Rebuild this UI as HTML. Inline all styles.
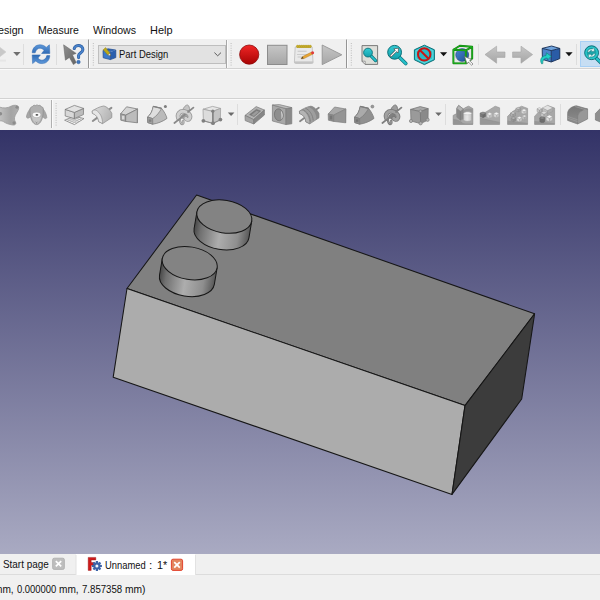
<!DOCTYPE html>
<html><head><meta charset="utf-8">
<style>
html,body{margin:0;padding:0;}
body{width:600px;height:600px;overflow:hidden;position:relative;background:#f0f0f0;font-family:"Liberation Sans",sans-serif;font-size:10.7px;color:#000;}
.abs{position:absolute;}
#menubar{left:0;top:0;width:600px;height:39px;background:#fff;}
.t{position:absolute;z-index:5;white-space:nowrap;line-height:12px;height:12px;transform-origin:0 0;color:#111;}
#ov{left:0;top:0;}
</style></head><body>
<div id="menubar" class="abs"></div>
<!-- active tab + highlighted button backgrounds -->
<div class="abs" style="left:76px;top:554px;width:119px;height:20.5px;background:#fff"></div>

<!-- TEXT -->
<span class="t" style="left:-2px;top:23.7px;transform:scaleX(1.0)">esign</span>
<span class="t" style="left:37.72px;top:23.7px;transform:scaleX(0.982)">Measure</span>
<span class="t" style="left:93.0px;top:23.7px;transform:scaleX(0.993)">Windows</span>
<span class="t" style="left:149.68px;top:23.7px;transform:scaleX(1.024)">Help</span>
<span class="t" style="left:119.1px;top:48.1px;transform:scaleX(0.884)">Part Design</span>
<span class="t" style="left:2.87px;top:558.1px;transform:scaleX(0.927)">Start page</span>
<span class="t" style="left:105.3px;top:559.3px;transform:scaleX(0.878)">Unnamed</span>
<span class="t" style="left:149.2px;top:559.3px;transform:scaleX(1.1)">:</span>
<span class="t" style="left:156.59px;top:559.3px;transform:scaleX(1.011)">1*</span>
<span class="t" style="left:-6.24px;top:582.6px;transform:scaleX(0.947)">mm,</span>
<span class="t" style="left:17.0px;top:582.6px;transform:scaleX(0.882)">0.000000</span>
<span class="t" style="left:59.35px;top:582.6px;transform:scaleX(0.947)">mm,</span>
<span class="t" style="left:81.6px;top:582.6px;transform:scaleX(0.902)">7.857358</span>
<span class="t" style="left:124.84px;top:582.6px;transform:scaleX(0.96)">mm)</span>

<!-- GRAPHICS OVERLAY -->
<svg id="ov" class="abs" width="600" height="600" viewBox="0 0 600 600">
<defs>
  <linearGradient id="bg" x1="0" y1="0" x2="0" y2="1">
   <stop offset="0" stop-color="#333367"/>
   <stop offset="1" stop-color="#a9aac2"/>
  </linearGradient>
  <linearGradient id="cyl" x1="0" y1="0" x2="1" y2="0">
   <stop offset="0" stop-color="#484848"/>
   <stop offset="0.12" stop-color="#707070"/>
   <stop offset="0.47" stop-color="#adadad"/>
   <stop offset="0.8" stop-color="#8e8e8e"/>
   <stop offset="1" stop-color="#585858"/>
  </linearGradient>
  <linearGradient id="gBlue" x1="0" y1="0" x2="0" y2="1"><stop offset="0" stop-color="#5e98da"/><stop offset="1" stop-color="#2f6bb5"/></linearGradient>
  <linearGradient id="gRed" x1="0" y1="0" x2="0" y2="1"><stop offset="0" stop-color="#f02626"/><stop offset="1" stop-color="#a80404"/></linearGradient>
  <linearGradient id="gGray" x1="0" y1="0" x2="0" y2="1"><stop offset="0" stop-color="#c6c6c6"/><stop offset="1" stop-color="#a6a6a6"/></linearGradient>
  <linearGradient id="gTeal" x1="0" y1="0" x2="0" y2="1"><stop offset="0" stop-color="#34ccd4"/><stop offset="1" stop-color="#12a0ac"/></linearGradient>
  <linearGradient id="gBox" x1="0" y1="0" x2="1" y2="1"><stop offset="0" stop-color="#4a86d0"/><stop offset="1" stop-color="#1e4f94"/></linearGradient>
  <linearGradient id="gRev" x1="0" y1="0" x2="1" y2="0.4"><stop offset="0" stop-color="#dedede"/><stop offset="1" stop-color="#b6b6b6"/></linearGradient>
  <linearGradient id="gCur" x1="0" y1="0" x2="1" y2="1"><stop offset="0" stop-color="#909090"/><stop offset="1" stop-color="#646464"/></linearGradient>
  <linearGradient id="gBlob" x1="0" y1="0" x2="1" y2="0"><stop offset="0" stop-color="#c2c2c2"/><stop offset="0.6" stop-color="#a4a4a4"/><stop offset="1" stop-color="#b0b0b0"/></linearGradient>
  <linearGradient id="gFil" x1="0" y1="0" x2="0" y2="1"><stop offset="0" stop-color="#767676"/><stop offset="1" stop-color="#8e8e8e"/></linearGradient>
  <linearGradient id="gCylS" x1="0" y1="0" x2="1" y2="0"><stop offset="0" stop-color="#d2d2d2"/><stop offset="0.45" stop-color="#e6e6e6"/><stop offset="1" stop-color="#c4c4c4"/></linearGradient>
  <g id="handle"><path d="M0.5,0v23" stroke="#bcbcbc" stroke-width="1" stroke-dasharray="1 1.4" fill="none"/></g>
</defs>

<!-- toolbar lines -->
<rect x="0" y="68" width="600" height="1" fill="#d2d2d2"/>
<rect x="0" y="69" width="600" height="1" fill="#fafafa"/>
<rect x="0" y="98" width="600" height="1" fill="#d2d2d2"/>
<rect x="0" y="99" width="600" height="1" fill="#fafafa"/>

<!-- VIEWPORT -->
<rect x="0" y="130" width="600" height="424" fill="url(#bg)"/>
<g stroke="#161616" stroke-width="1.05" stroke-linejoin="round">
  <polygon points="196.6,195 534.6,313.8 465,405.6 127,288.5" fill="#808080"/>
  <polygon points="127,288.5 465,405.6 452,494.4 113.2,377.2" fill="#acacac"/>
  <polygon points="465,405.6 534.6,313.8 521.7,399 452,494.4" fill="#3c3c3c"/>
</g>
<!-- cylinders -->
<g id="cyl1" transform="translate(224.3,216.6) rotate(9.5)">
  <path d="M-27.8,0 L-27.8,16.9 A27.8,16.3 0 0 0 27.8,16.9 L27.8,0 Z" fill="url(#cyl)" stroke="#161616" stroke-width="1"/>
  <ellipse cx="0" cy="0" rx="27.8" ry="16.3" fill="#838383" stroke="#161616" stroke-width="1"/>
</g>
<g id="cyl2" transform="translate(189.7,263.2) rotate(9.5)">
  <path d="M-27.8,0 L-27.8,16.9 A27.8,16.3 0 0 0 27.8,16.9 L27.8,0 Z" fill="url(#cyl)" stroke="#161616" stroke-width="1"/>
  <ellipse cx="0" cy="0" rx="27.8" ry="16.3" fill="#838383" stroke="#161616" stroke-width="1"/>
</g>

<!-- ===== TOOLBAR 1 ===== -->
<g id="tb1">
 <!-- partial redo arrow -->
 <path d="M-1,46.6 L6,52 L-1,57.4 Z" fill="#c8c8c8" stroke="#d0d0d0" stroke-width="0.6"/><rect x="0" y="59.6" width="6" height="2" fill="#e6e6e6"/>
 <path d="M13.2,52 h7.4 l-3.7,4 z" fill="#6f6f6f"/>
 <rect x="23" y="44" width="1" height="21" fill="#dddddd"/>
 <!-- refresh -->
 <g fill="url(#gBlue)" stroke="#2d66ae" stroke-width="0.5" stroke-linejoin="round">
  <path id="rf" d="M32.2,52.8 C32.4,48 35.6,44.8 40,44.8 C42.6,44.8 44.6,45.8 46.2,47.4 L49.4,44.8 L49.8,53.5 L41.6,53.5 L44,50.4 C43,49 41.6,48.2 40,48.2 C37.6,48.2 35.8,50 35.2,52.8 Z"/>
  <use href="#rf" transform="rotate(180 41 54.2)"/>
 </g>
 <rect x="56" y="44" width="1" height="21" fill="#dddddd"/>
 <!-- whats this -->
 <path d="M63.6,44.8 L76.2,53.4 L72.4,54.8 L76.2,62.6 L73.4,64.6 L69.4,57.4 L65.4,60.2 Z" fill="url(#gCur)" stroke="#626262" stroke-width="0.5" stroke-linejoin="round"/>
 <path d="M74.2,48.6 C74.8,45.8 77.8,45.2 80,45.8 C82.8,46.6 83.6,49.4 82.2,51.4 C81,53 78.8,53.6 78.6,55.4 L78.6,57.4" fill="none" stroke="#2c5c9e" stroke-width="3" stroke-linecap="round"/>
 <path d="M74.2,48.6 C74.8,45.8 77.8,45.2 80,45.8 C82.8,46.6 83.6,49.4 82.2,51.4 C81,53 78.8,53.6 78.6,55.4 L78.6,57.4" fill="none" stroke="#4a84cc" stroke-width="1.7" stroke-linecap="round"/>
 <circle cx="78.5" cy="62" r="1.7" fill="#3f78c0" stroke="#2c5c9e" stroke-width="0.6"/>
 <!-- toolbar separator + handle -->
 <rect x="88" y="39.5" width="1" height="28.5" fill="#959595"/>
 <rect x="89" y="40" width="1" height="28" fill="#fbfbfb"/>
 <use href="#handle" x="92.8" y="43"/>
 <!-- combobox -->
 <rect x="98.5" y="45.5" width="127" height="18" fill="#e2e2e2" stroke="#bebebe" stroke-width="1"/>
 <!-- part design icon -->
 <g stroke-linejoin="round">
  <path d="M103,50.4 L110.4,52 L110.4,59.6 L103.2,57.8 Z" fill="#3b79cb"/>
  <path d="M110.4,52 L115.8,50 L115.8,57.6 L110.4,59.6 Z" fill="#2a5fae"/>
  <path d="M103,50.4 L108,48.8 L115.8,50 L110.4,52 Z" fill="#3468b4"/>
  <path d="M103,50.4 L108,48.8 L115.8,50 L115.8,57.6 L110.4,59.6 L103.2,57.8 Z M110.4,52 L110.4,59.6" fill="none" stroke="#1d478c" stroke-width="0.7"/>
  <path d="M103.2,49.8 L105.6,47.6 L110,53.2 L107.8,55 Z" fill="#bca81a" stroke="#8a7a10" stroke-width="0.4"/>
  <path d="M107.8,55 L110,53.2 L110.8,56 Z" fill="#f6f2e6" stroke="#6a5a20" stroke-width="0.3"/>
  <path d="M109.9,55.2 L110.8,56 L110.4,54.8 Z" fill="#3a3010"/>
 </g>
 <path d="M214.4,52.6 L217.7,55.8 L221,52.6" fill="none" stroke="#5a5a5a" stroke-width="1"/>
 <rect x="226" y="40" width="1" height="28" fill="#a8a8a8"/>
 <rect x="227" y="40" width="1" height="28" fill="#fbfbfb"/>
 <use href="#handle" x="230.6" y="43"/>
 <!-- record -->
 <circle cx="249.2" cy="54.6" r="9.6" fill="url(#gRed)" stroke="#8e0a0a" stroke-width="0.8"/>
 <!-- stop -->
 <rect x="267.5" y="45.3" width="19.5" height="19.2" fill="url(#gGray)" stroke="#8c8c8c" stroke-width="1"/>
 <!-- notepad -->
 <g>
  <path d="M295.2,47 h17 l0.8,15 q0,1.4 -1.4,1.4 h-15.8 q-1.4,0 -1.4,-1.4 z" fill="#e9e9e9" stroke="#b4b4b4" stroke-width="0.7"/>
  <rect x="294.6" y="61.4" width="18.6" height="2" fill="#c4c4c4"/>
  <rect x="296.8" y="46.3" width="14.2" height="1.5" fill="#c4aa28"/>
  <g fill="#c8ae2a" stroke="#a08c1c" stroke-width="0.3"><circle cx="297.6" cy="46.3" r="1.25"/><circle cx="299.7" cy="46.3" r="1.25"/><circle cx="301.8" cy="46.3" r="1.25"/><circle cx="303.9" cy="46.3" r="1.25"/><circle cx="306.0" cy="46.3" r="1.25"/><circle cx="308.1" cy="46.3" r="1.25"/><circle cx="310.2" cy="46.3" r="1.25"/></g>
  <rect x="297.6" y="50.6" width="9" height="1.4" fill="#cfcfcf"/>
  <rect x="297" y="54.2" width="14" height="0.8" fill="#c4c4c4"/>
  <rect x="297.6" y="56.2" width="6" height="1.6" fill="#d4d4d4"/>
  <path d="M301,58.8 L302.6,56.6 L311.6,52 L313,54 L304,58.6 Z" fill="#e8a634" stroke="#a46a14" stroke-width="0.4"/>
  <path d="M301,58.8 L302.6,56.6 L303.6,58.4 Z" fill="#5a4a30"/>
  <circle cx="312.6" cy="52.8" r="1.5" fill="#e03a3a"/>
 </g>
 <!-- play -->
 <path d="M322.2,45 L341.8,54.8 L322.2,64.6 Z" fill="url(#gGray)" stroke="#959595" stroke-width="0.9" stroke-linejoin="round"/>
 <rect x="346" y="39.5" width="1" height="28.5" fill="#959595"/>
 <rect x="347" y="40" width="1" height="28" fill="#fbfbfb"/>
 <use href="#handle" x="350.8" y="43"/>
 <!-- zoom fit page -->
 <g>
  <path d="M362,45.6 h15.6 v18.8 h-12.4 l-3.2,-3.2 z" fill="#dedfda" stroke="#6e6e6e" stroke-width="0.9" stroke-linejoin="round"/>
  <path d="M362,61.2 l3.2,0 l0,3.2 z" fill="#f4f4f4" stroke="#6e6e6e" stroke-width="0.6"/>
  <path d="M371,55.8 L375.6,60.6" stroke="#0b6f78" stroke-width="3.2" stroke-linecap="round"/>
  <path d="M371,55.8 L375.6,60.6" stroke="#25c0ca" stroke-width="1.8" stroke-linecap="round"/>
  <circle cx="368" cy="52.6" r="4.4" fill="url(#gTeal)" stroke="#0b6f78" stroke-width="0.9"/>
 </g>
 <!-- zoom w/ arrow -->
 <g>
  <path d="M399.4,57.2 L405.8,63.6" stroke="#0b6f78" stroke-width="3.6" stroke-linecap="round"/>
  <path d="M399.4,57.2 L405.8,63.6" stroke="#25c0ca" stroke-width="2.2" stroke-linecap="round"/>
  <circle cx="394.6" cy="52.3" r="6.9" fill="url(#gTeal)" stroke="#0b6f78" stroke-width="1"/>
  <path d="M391,55.9 L396.2,50.7" stroke="#4a4a4a" stroke-width="2.4" stroke-linecap="round"/>
  <path d="M398.6,48.2 L398,53 L393.8,48.8 Z" fill="#fff" stroke="#4a4a4a" stroke-width="0.7" stroke-linejoin="round"/>
  <path d="M391,55.9 L396.2,50.7" stroke="#fff" stroke-width="1.3" stroke-linecap="round"/>
 </g>
 <!-- hexagon no -->
 <g>
  <path d="M424.4,45.2 L434.4,49.8 L434.4,59.8 L424.4,64.6 L414.4,59.8 L414.4,49.8 Z" fill="#2ec4cc" stroke="#0b6f78" stroke-width="1" stroke-linejoin="round"/>
  <path d="M424.4,47 L432.8,50.8 L432.8,58.8 L424.4,62.8 L416,58.8 L416,50.8 Z" fill="none" stroke="#7fe4ea" stroke-width="0.6"/>
  <circle cx="424.2" cy="54.4" r="6.2" fill="#27bac4" stroke="#c81414" stroke-width="2"/>
  <path d="M419.8,50 L428.6,58.8" stroke="#c81414" stroke-width="2"/>
 </g>
 <path d="M440,52.2 h7.2 l-3.6,4 z" fill="#111"/>
 <!-- bounding box select -->
 <g>
  <path d="M453.4,49.8 L459.8,45.8 L472.2,46.8 L472.2,58.6 L465.8,63.4 L453.4,63.2 Z" fill="#e4e8e4"/>
  <circle cx="462.2" cy="55" r="6.5" fill="url(#gBox)" stroke="#1a3a70" stroke-width="0.5"/>
  <g fill="none" stroke="#0f7f0f" stroke-width="1.9" stroke-linejoin="round">
   <path d="M453.4,49.8 L465.8,50.4 L465.8,63.4 L453.4,63.2 Z"/>
   <path d="M453.4,49.8 L459.8,45.8 L472.2,46.8 L465.8,50.4 M472.2,46.8 L472.2,58.6 L465.8,63.4"/>
  </g>
  <g fill="none" stroke="#1fb81f" stroke-width="0.9" stroke-linejoin="round">
   <path d="M453.4,49.8 L465.8,50.4 L465.8,63.4 L453.4,63.2 Z"/>
   <path d="M453.4,49.8 L459.8,45.8 L472.2,46.8 L465.8,50.4 M472.2,46.8 L472.2,58.6 L465.8,63.4"/>
  </g>
  <path d="M464.6,56.4 L471.6,59.8 L469.6,60.8 L473,64 L471.6,65.2 L468.4,62 L467,63.8 Z" fill="#fff" stroke="#6a6a6a" stroke-width="0.7" stroke-linejoin="round"/>
 </g>
 <rect x="478" y="44" width="1" height="21" fill="#dddddd"/>
 <!-- back / fwd arrows -->
 <path d="M485,54.6 L496.6,46.2 L496.6,52 L505,52 L505,57.4 L496.6,57.4 L496.6,63.2 Z" fill="url(#gGray)" stroke="#a4a4a4" stroke-width="0.6" stroke-linejoin="round"/>
 <path d="M532.6,54.6 L521,46.2 L521,52 L512.6,52 L512.6,57.4 L521,57.4 L521,63.2 Z" fill="url(#gGray)" stroke="#a4a4a4" stroke-width="0.6" stroke-linejoin="round"/>
 <!-- link box -->
 <g stroke-linejoin="round">
  <path d="M542.2,48.4 L551.2,50.6 L551.2,62 L542.4,59.4 Z" fill="#4c86cc"/>
  <path d="M551.2,50.6 L559.8,48.4 L559.8,58.6 L551.2,62 Z" fill="#2a5ca6"/>
  <path d="M542.2,48.4 L551.6,46 L559.8,48.4 L551.2,50.6 Z" fill="#6ea2dc"/>
  <path d="M542.2,48.4 L551.6,46 L559.8,48.4 L559.8,58.6 L551.2,62 L542.4,59.4 Z M542.2,48.4 L551.2,50.6 L559.8,48.4 M551.2,50.6 L551.2,62" fill="none" stroke="#152c54" stroke-width="0.9"/>
  <path d="M541.6,63.8 C539.4,59.6 541.4,56 546,55.6 L546.4,52.8 L551.2,56.2 L547.6,60 L547.2,58 C544.4,58 542.4,60 542.8,63.6 Z" fill="#21cfc6" stroke="#0a7a76" stroke-width="0.6"/>
 </g>
 <path d="M565.4,52.2 h7.2 l-3.6,4 z" fill="#111"/>
 <rect x="576" y="44" width="1" height="21" fill="#dddddd"/>
 <!-- highlighted button -->
 <rect x="580.5" y="41.5" width="24" height="25" fill="#c7def3" stroke="#a8d0f5" stroke-width="1"/>
 <g>
  <path d="M596.6,58.4 L601,62.8" stroke="#0b6f78" stroke-width="3.6" stroke-linecap="round"/>
  <path d="M596.6,58.4 L601,62.8" stroke="#25c0ca" stroke-width="2.2" stroke-linecap="round"/>
  <circle cx="591.6" cy="52.7" r="6.9" fill="#1aa4a8" stroke="#0b6f78" stroke-width="1"/><circle cx="591.6" cy="52.7" r="5.6" fill="none" stroke="#2cc8cc" stroke-width="1.4"/>
  <path d="M587.4,52 C587.8,49.6 590,48.6 592.2,49 L594.2,47.8 L594.4,51.6 L590.8,51.4 L591.8,50.6 C590.6,50.4 589.6,51 589.2,52.2 Z" fill="#dceeee" stroke="#0b6f78" stroke-width="0.4"/>
  <path d="M595.4,53.8 C595,56.2 592.8,57.2 590.6,56.8 L588.6,58 L588.4,54.2 L592,54.4 L591,55.2 C592.2,55.4 593.2,54.8 593.6,53.6 Z" fill="#dceeee" stroke="#0b6f78" stroke-width="0.4"/>
 </g>
</g>

<!-- ===== TOOLBAR 2 ===== -->
<g id="tb2" stroke-linejoin="round">
 <!-- blob -->
 <path d="M-1,107 C4,108.6 8,108 11,106.2 C13.6,104.8 17.6,104.8 18.6,107 C19.4,109.4 16.6,112.4 15.2,115.4 C14,118.2 14.4,120.4 15.6,122.4 C16.4,124 15,125.4 12.6,125 C9,124.4 6,123.4 3.4,121.6 C2,120.8 0.6,120.6 -1,121 Z" fill="url(#gBlob)" stroke="#9a9a9a" stroke-width="0.8"/>
 <circle cx="17" cy="107.2" r="1.6" fill="#8c8c8c"/><circle cx="14" cy="122.8" r="1.6" fill="#8c8c8c"/><circle cx="0.4" cy="113.8" r="1.8" fill="#8c8c8c"/>
 <!-- sheep -->
 <g>
  <path d="M30.6,108.4 C28.4,110.6 26.6,114.2 26.4,117 C27,118.8 29.4,118.6 31.2,115.6 Z" fill="#a6a6a6" stroke="#8c8c8c" stroke-width="0.6"/>
  <path d="M42.6,108.4 C44.8,110.6 46.6,114.2 46.8,117.6 C46,119.4 43.8,118.8 42,115.6 Z" fill="#a6a6a6" stroke="#8c8c8c" stroke-width="0.6"/>
  <path d="M30,110.4 C29.6,108.2 30.8,106.8 32.2,106.8 C32.8,105.4 34.6,104.8 35.6,105.6 C36.4,104.8 37.6,104.8 38.2,105.6 C39.4,104.8 41,105.6 41.4,106.8 C43,106.8 43.6,108.4 43.2,110.4 C43.4,113.6 42.8,117.4 41.4,120.6 C40.2,123 38.4,124.6 36.6,124.6 C34.8,124.6 33,123 31.8,120.6 C30.4,117.4 29.8,113.6 30,110.4 Z" fill="#b0b0b0" stroke="#8a8a8a" stroke-width="0.7"/>
  <path d="M31.8,116.2 C32.8,120.4 34.6,123.6 36.6,123.8 C38.6,123.6 40.4,120.4 41.4,116.2 C38.6,118 34.6,118 31.8,116.2 Z" fill="#c6c6c6"/>
  <ellipse cx="36.6" cy="114.8" rx="3.9" ry="2.4" fill="#fafafa"/>
  <ellipse cx="36.9" cy="114.9" rx="1.4" ry="0.8" fill="#4a4a4a"/>
  <path d="M35.4,121.6 L36.6,122.8 L37.8,121.6 M36.6,122.8 V123.8" stroke="#707070" stroke-width="0.5" fill="none"/>
 </g>
 <rect x="51" y="100" width="1" height="28" fill="#b0b0b0"/>
 <rect x="52" y="100" width="1" height="28" fill="#fbfbfb"/>
 <use href="#handle" x="55.6" y="103"/>
 <!-- pad -->
 <g stroke="#727272" stroke-width="0.7">
  <path d="M64.6,120.2 L74.2,116.2 L84,118.6 L74.4,124.6 Z" fill="#f6f6f6"/>
  <path d="M67,121.3 L76.6,117 M69.4,122.4 L79.2,117.6 M71.9,123.5 L81.6,118.2 M66.8,119.2 L76.8,123.1 M69.4,118.2 L79.2,121.6 M71.8,117.2 L81.6,120.1" stroke="#8e8e8e" stroke-width="0.5" fill="none"/>
  <path d="M65.2,109.4 L74.4,112.4 L74.4,118.6 L65.2,116 Z" fill="#d8d8d8"/>
  <path d="M74.4,112.4 L83.6,108.4 L83.4,114.6 L74.4,118.6 Z" fill="#bcbcbc"/>
  <path d="M65.2,109.4 L74.4,105.4 L83.6,108.4 L74.4,112.4 Z" fill="#e2e2e2"/>
 </g>
 <!-- revolution -->
 <g>
  <path d="M92.8,121 L97.4,117.6 M108.4,109.8 L111.4,107.8" stroke="#8e8e8e" stroke-width="2" stroke-linecap="round"/>
  <path d="M92.2,111 C95,109 100,106.4 103.6,106 C106.6,106.4 110,109.6 111.8,113.4 L111.8,117.6 L102.6,123.6 L98.6,121.6 C98.4,118 96,114 92.4,113.4 Z" fill="url(#gRev)" stroke="#8a8a8a" stroke-width="0.7"/>
  <path d="M92.2,111 C93.4,109.8 95.4,109.8 96.4,110.4 C100,112.6 102.6,117.4 102.6,123.6 L98.6,121.6 C98.4,118 96,114.4 92.4,113.4 Z" fill="#e6e6e6" stroke="#8a8a8a" stroke-width="0.6"/>
 </g>
 <!-- loft -->
 <g stroke="#7c7c7c" stroke-width="0.8">
  <path d="M120.6,113.8 L126.6,106.8 L137.6,109 L125.6,115.2 Z" fill="#d4d4d4"/>
  <path d="M125.6,115.2 L137.6,109 L137.4,122.8 L125.6,121.4 Z" fill="#bcbcbc"/>
  <path d="M120.6,113.8 L125.6,115.2 L125.6,121.4 L120.8,120.2 Z" fill="#a4a4a4"/>
  <rect x="122" y="115.8" width="2.4" height="3.6" fill="#d8d8d8" stroke="none"/>
  <path d="M137.4,108.8 V123" stroke="#8a8a8a" stroke-width="1.2"/>
 </g>
 <!-- sweep -->
 <g stroke="#808080" stroke-width="0.8">
  <path d="M147.6,117 C150.8,114.6 152.4,110.6 153.2,106.4 L161.6,108.4 C164.4,111.8 166.2,115.4 167.0,118.4 C162.6,121.6 157.8,123.4 152.8,124.2 L147.8,122.6 Z" fill="#bababa"/>
  <path d="M153.2,106.4 L161.6,108.4 C159.6,112 156.6,116.2 152.6,118.6 L147.6,117 C150.8,114.6 152.4,110.6 153.2,106.4 Z" fill="#dedede"/>
  <path d="M147.6,117 L152.6,118.6 L152.8,124.2 L147.8,122.6 Z" fill="#a0a0a0"/>
  <rect x="148.8" y="119.4" width="2.6" height="2.4" fill="#808080" stroke="none"/>
  <path d="M153.2,106.4 L161.6,108.4" stroke="#808080" stroke-width="1.3"/>
  <circle cx="165.4" cy="106.6" r="1.5" fill="#7c7c7c" stroke="none" stroke-width="0.5"/>
 </g>
 <!-- helix -->
 <g fill="none" stroke-linecap="round" stroke-linejoin="round">
  <path d="M 182.6,110 C 183.8,107 185.8,104.8 187.6,105 C 189.0,105.4 189.6,108 189.6,110.4 L 186.4,112 Z" fill="#c4c4c4" stroke="#969696" stroke-width="0.9"/>
  <path d="M 180.6,118 C 180.0,114.6 183.0,113 185.6,113.8 C 188.0,114.8 188.6,117.6 187.0,119 L 184.0,119.4 Z" fill="#a2a2a2" stroke="none"/>
  <path d="M 181.2,117.6 L 188.0,112" stroke="#8a8a8a" stroke-width="1.8"/>
  <path d="M 179.8,119.8 C 180.2,122.4 181.4,124.4 182.6,124 C 183.4,123.6 183.6,122.2 183.2,120.8" stroke="#969696" stroke-width="2.3"/>
  <path d="M 179.8,119.8 C 180.2,122.4 181.4,124.4 182.6,124 C 183.4,123.6 183.6,122.2 183.2,120.8" stroke="#c4c4c4" stroke-width="1"/>
  <path d="M 178.6,118.6 C 176.6,113.8 180.0,110.6 184.4,111.4 C 188.8,112.2 191.2,115.8 189.4,118.6 C 188.4,120 186.4,119.8 185.8,118.4" stroke="#969696" stroke-width="4.6"/>
  <path d="M 178.6,118.6 C 176.6,113.8 180.0,110.6 184.4,111.4 C 188.8,112.2 191.2,115.8 189.4,118.6 C 188.4,120 186.4,119.8 185.8,118.4" stroke="#d0d0d0" stroke-width="3"/>
  <path d="M 174.4,123 L 181.2,117.6 M 188.0,112 L 193.4,107.6" stroke="#8a8a8a" stroke-width="1.8"/>
 </g>
 <!-- additive primitive cube -->
 <g stroke="#a2a2a2" stroke-width="0.8">
  <path d="M203,109.2 L212.6,106.4 L220.6,108.4 L212.8,111.4 Z" fill="#e6e6e6"/>
  <path d="M203,109.2 L212.8,111.4 L213,123.4 L203.4,120.8 Z" fill="#dcdcdc"/>
  <path d="M212.8,111.4 L220.6,108.4 L220.4,119.8 L213,123.4 Z" fill="#c4c4c4"/>
  <path d="M212.9,111.4 V123.4" stroke="#7c7c7c" stroke-width="1.4"/>
  <path d="M203.4,120.8 L213,123.4 L220.4,119.8" stroke="#8a8a8a" stroke-width="1" fill="none"/>
  <g fill="#808080" stroke="none"><circle cx="203.4" cy="120.8" r="1.9"/><circle cx="213" cy="123.2" r="1.9"/><circle cx="220.4" cy="119.6" r="1.9"/><circle cx="212.8" cy="111.2" r="1.6"/></g>
 </g>
 <path d="M227.8,112.4 h6.6 l-3.3,3.7 z" fill="#6a6a6a"/>
 <rect x="237" y="104" width="1" height="21" fill="#dddddd"/>
 <!-- pocket -->
 <g stroke="#7a7a7a" stroke-width="0.7">
  <path d="M245,115.4 L256.2,106.6 L264.4,110 L253.6,119.6 Z" fill="#b2b2b2"/>
  <path d="M245,115.4 L253.6,119.6 L253.8,124 L245.2,120.6 Z" fill="#a4a4a4"/>
  <path d="M253.6,119.6 L264.4,110 L264.4,115 L253.8,124 Z" fill="#868686"/>
  <path d="M249.6,114.6 L256.4,109.4 L260.6,111 L254,116.6 Z" fill="#7c7c7c" stroke="#6a6a6a" stroke-width="0.5"/>
  <path d="M251.4,115 L256.6,110.8 L259,111.8 L254,116 Z" fill="#9c9c9c" stroke="none"/>
 </g>
 <!-- hole -->
 <g stroke="#7c7c7c" stroke-width="0.7">
  <path d="M272.4,105 L286,108.6 L286,124.6 L272.4,121 Z" fill="#a8a8a8"/>
  <path d="M286,108.6 L291.8,107.6 L291.8,123.8 L286,124.6 Z" fill="#8a8a8a"/>
  <path d="M272.4,105 L279.4,104.6 L291.8,107.6 L286,108.6 Z" fill="#bcbcbc"/>
  <ellipse cx="278.8" cy="114.8" rx="4.4" ry="6" fill="#8e8e8e" stroke="#6e6e6e" transform="rotate(-8 278.8 114.8)"/>
  <path d="M281,110.4 C283,112.6 283.2,117 281.6,119.6 C281.6,116.4 281.6,113.4 281,110.4 Z" fill="#e8e8e8" stroke="none"/>
 </g>
 <!-- groove -->
 <g transform="translate(207.2,0.2)">
  <path d="M92.8,121 L97.4,117.6 M108.6,109.6 L111.6,107.6" stroke="#868686" stroke-width="1.8" stroke-linecap="round"/>
  <path d="M92.2,111 C95,109 100,106.4 103.6,106 C106.6,106.4 110,109.6 111.8,113.4 L111.8,117.6 L102.6,123.6 L98.6,121.6 C98.4,118 96,114 92.4,113.4 Z" fill="#9e9e9e" stroke="#808080" stroke-width="0.7"/>
  <path d="M100.6,106.8 C104.2,107.2 108,111 109,116 L109,119.4 L111.8,117.6 L111.8,113.4 C110,109.6 106.6,106.4 103.6,106 Z" fill="#8a8a8a"/>
  <path d="M95.4,109.4 C99.6,111.2 102.8,115.6 103.2,121.4 M98.2,108 C102.2,109.6 105.6,114.4 106,120.2" stroke="#7e7e7e" stroke-width="0.9" fill="none"/>
  <path d="M92.2,111 C93.4,109.8 95.4,109.8 96.4,110.4 C100,112.6 102.6,117.4 102.6,123.6 L98.6,121.6 C98.4,118 96,114.4 92.4,113.4 Z" fill="#b4b4b4" stroke="#808080" stroke-width="0.6"/>
 </g>
 <!-- subtractive loft -->
 <g stroke="#808080" stroke-width="0.7">
  <path d="M328.2,114 L334.6,107 L345.8,109 L333.6,115.2 Z" fill="#a8a8a8"/>
  <path d="M333.6,115.2 L345.8,109 L345.6,122.8 L333.6,121.4 Z" fill="#949494"/>
  <path d="M328.2,114 L333.6,115.2 L333.6,121.4 L328.4,120.2 Z" fill="#8a8a8a"/>
  <rect x="329.8" y="115.8" width="2.4" height="3.6" fill="#767676" stroke="none"/>
  <path d="M345.6,108.8 V123" stroke="#8a8a8a" stroke-width="1.1"/>
 </g>
 <!-- subtractive sweep -->
 <g stroke="#7c7c7c" stroke-width="0.8">
  <path d="M354.6,117 C357.8,114.6 359.4,110.6 360.2,106.4 L368.6,108.4 C371.4,111.8 373.2,115.4 374.0,118.4 C369.6,121.6 364.8,123.4 359.8,124.2 L354.8,122.6 Z" fill="#909090"/>
  <path d="M360.2,106.4 L368.6,108.4 C366.6,112 363.6,116.2 359.6,118.6 L354.6,117 C357.8,114.6 359.4,110.6 360.2,106.4 Z" fill="#aaaaaa"/>
  <path d="M354.6,117 L359.6,118.6 L359.8,124.2 L354.8,122.6 Z" fill="#8a8a8a"/>
  <rect x="355.8" y="119.4" width="2.6" height="2.4" fill="#727272" stroke="none"/>
  <path d="M360.2,106.4 L368.6,108.4" stroke="#7c7c7c" stroke-width="1.3"/>
  <circle cx="372.4" cy="106.6" r="1.5" fill="#9a9a9a" stroke="#707070" stroke-width="0.5"/>
 </g>
 <!-- subtractive helix -->
 <g fill="none" stroke-linecap="round" stroke-linejoin="round">
  <path d="M 390.6,110 C 391.8,107 393.8,104.8 395.6,105 C 397.0,105.4 397.6,108 397.6,110.4 L 394.4,112 Z" fill="#9c9c9c" stroke="#767676" stroke-width="0.9"/>
  <path d="M 388.6,118 C 388.0,114.6 391.0,113 393.6,113.8 C 396.0,114.8 396.6,117.6 395.0,119 L 392.0,119.4 Z" fill="#7e7e7e" stroke="none"/>
  <path d="M 389.2,117.6 L 396.0,112" stroke="#808080" stroke-width="1.8"/>
  <path d="M 387.8,119.8 C 388.2,122.4 389.4,124.4 390.6,124 C 391.4,123.6 391.6,122.2 391.2,120.8" stroke="#767676" stroke-width="2.3"/>
  <path d="M 387.8,119.8 C 388.2,122.4 389.4,124.4 390.6,124 C 391.4,123.6 391.6,122.2 391.2,120.8" stroke="#9c9c9c" stroke-width="1"/>
  <path d="M 386.6,118.6 C 384.6,113.8 388.0,110.6 392.4,111.4 C 396.8,112.2 399.2,115.8 397.4,118.6 C 396.4,120 394.4,119.8 393.8,118.4" stroke="#767676" stroke-width="4.6"/>
  <path d="M 386.6,118.6 C 384.6,113.8 388.0,110.6 392.4,111.4 C 396.8,112.2 399.2,115.8 397.4,118.6 C 396.4,120 394.4,119.8 393.8,118.4" stroke="#a0a0a0" stroke-width="3"/>
  <path d="M 382.4,123 L 389.2,117.6 M 396.0,112 L 401.4,107.6" stroke="#808080" stroke-width="1.8"/>
 </g>
 <!-- subtractive primitive cube -->
 <g stroke="#787878" stroke-width="0.8">
  <path d="M410.6,109.4 L420.2,106.6 L428.2,108.6 L420.4,111.6 Z" fill="#a8a8a8"/>
  <path d="M410.6,109.4 L420.4,111.6 L420.6,123.6 L411,121 Z" fill="#9a9a9a"/>
  <path d="M420.4,111.6 L428.2,108.6 L428,120 L420.6,123.6 Z" fill="#8a8a8a"/>
  <g fill="#b4b4b4" stroke="#7e7e7e" stroke-width="0.7"><circle cx="411" cy="121" r="1.6"/><circle cx="420.6" cy="123.3" r="1.6"/><circle cx="427.6" cy="119.8" r="1.6"/><circle cx="420.5" cy="111.2" r="1.4"/></g>
 </g>
 <path d="M435.2,112.4 h6.6 l-3.3,3.7 z" fill="#6a6a6a"/>
 <rect x="445" y="104" width="1" height="21" fill="#dddddd"/>
 <!-- mirrored -->
 <g stroke="#8c8c8c" stroke-width="0.7">
  <path d="M453.2,124.4 L453.2,115.4 L456.8,113.6 L456.8,108.4 L458.6,105.4 L463.4,109 L465.4,107.6 L468.6,106.2 L472.8,108.6 L472.8,124.4 Z" fill="#a8a8a8"/>
  <path d="M463.8,110.4 C465.4,108.6 469.6,107.6 472.6,109.6 L472.6,113 C470,110.8 466,110.8 463.8,113 Z" fill="#969696" stroke="none"/>
  <path d="M456.8,108.4 L460.4,111.2 L463.4,109 L463.4,118.8 L460.4,120.2 L456.8,117.2 Z" fill="#888888"/>
  <path d="M456.8,108.4 L458.6,105.4 L463.4,109 L460.4,111.2 Z" fill="#b4b4b4"/>
  <path d="M460.4,111.2 L460.4,120.2" stroke="#787878" stroke-width="0.7"/>
  <path d="M453.2,119.4 C457,119.6 460,121 462,122.6 C464,124 468,124.2 472.8,123.4 L472.8,124.4 L453.2,124.4 Z" fill="#949494" stroke="none"/>
  <path d="M453.2,119.4 C457,119.6 460,121 462,122.6" stroke="#8a8a8a" stroke-width="0.5" fill="none"/>
  <path d="M463.6,113.6 L463.6,119.8 C463.6,121.8 471.6,121.8 471.6,119.8 L471.6,113.6 Z" fill="url(#gCylS)" stroke="#a0a0a0" stroke-width="0.5"/>
  <path d="M463.6,113.6 C463.8,111.4 471.4,111.4 471.6,113.6 C471.4,115.2 463.8,115.2 463.6,113.6 Z" fill="#f2f2f2" stroke="#b4b4b4" stroke-width="0.4"/>
 </g>
 <!-- linear pattern -->
 <g stroke="#8e8e8e" stroke-width="0.6">
  <path d="M480.2,124.4 L480.2,113 L485.6,112.2 L495.2,106.2 L499.6,107.8 L499.6,124.4 Z" fill="#a9a9a9"/>
  <path d="M480.2,118.2 L499.6,122.4 L499.6,124.4 L480.2,124.4 Z" fill="#989898" stroke="none"/>
  <path d="M480.2,118.2 L499.6,122.4" stroke="#8a8a8a" stroke-width="0.5"/>
 </g>
 <g stroke="#686868" stroke-width="0.4"><path d="M480.3,113.2 L483.0,114.6 L483.0,117.7 L480.3,116.4 Z" fill="#7a7a7a"/><path d="M485.7,113.2 L483.0,114.6 L483.0,117.7 L485.7,116.4 Z" fill="#6c6c6c"/><path d="M480.3,113.2 L483.0,111.9 L485.7,113.2 L483.0,114.6 Z" fill="#909090"/></g><g stroke="#a8a8a8" stroke-width="0.3"><path d="M486.9,114.0 L489.6,115.3 L489.6,118.2 L486.9,116.9 Z" fill="#d6d6d6"/><path d="M492.3,114.0 L489.6,115.3 L489.6,118.2 L492.3,116.9 Z" fill="#c2c2c2"/><path d="M486.9,114.0 L489.6,112.6 L492.3,114.0 L489.6,115.3 Z" fill="#f2f2f2"/></g><g stroke="#a8a8a8" stroke-width="0.3"><path d="M493.7,113.5 L496.4,114.9 L496.4,117.8 L493.7,116.5 Z" fill="#d6d6d6"/><path d="M499.1,113.5 L496.4,114.9 L496.4,117.8 L499.1,116.5 Z" fill="#c2c2c2"/><path d="M493.7,113.5 L496.4,112.2 L499.1,113.5 L496.4,114.9 Z" fill="#f2f2f2"/></g>
 <!-- polar pattern -->
 <g stroke="#8e8e8e" stroke-width="0.6">
  <path d="M507.6,124.4 L507.6,116.4 L512,112 L518,108 L521.6,106.2 L527.6,108.4 L527.6,124.4 Z" fill="#a8a8a8"/>
  <path d="M507.6,120.6 L527.6,123 L527.6,124.4 L507.6,124.4 Z" fill="#969696" stroke="none"/>
 </g>
 <g stroke="#8a8a8a" stroke-width="0.4"><path d="M515.9,108.3 L518.2,109.5 L518.2,112.0 L515.9,110.8 Z" fill="#b4b4b4"/><path d="M520.5,108.3 L518.2,109.5 L518.2,112.0 L520.5,110.8 Z" fill="#a4a4a4"/><path d="M515.9,108.3 L518.2,107.2 L520.5,108.3 L518.2,109.5 Z" fill="#c8c8c8"/></g><g stroke="#868686" stroke-width="0.4"><path d="M510.5,113.0 L513.0,114.2 L513.0,117.1 L510.5,115.9 Z" fill="#b0b0b0"/><path d="M515.5,113.0 L513.0,114.2 L513.0,117.1 L515.5,115.9 Z" fill="#a0a0a0"/><path d="M510.5,113.0 L513.0,111.7 L515.5,113.0 L513.0,114.2 Z" fill="#cfcfcf"/></g><g stroke="#868686" stroke-width="0.4"><path d="M511.0,118.1 L513.4,119.3 L513.4,121.9 L511.0,120.7 Z" fill="#9a9a9a"/><path d="M515.8,118.1 L513.4,119.3 L513.4,121.9 L515.8,120.7 Z" fill="#8e8e8e"/><path d="M511.0,118.1 L513.4,116.9 L515.8,118.1 L513.4,119.3 Z" fill="#b4b4b4"/></g><g stroke="#9c9c9c" stroke-width="0.3"><path d="M521.4,110.2 L524.0,111.5 L524.0,114.3 L521.4,113.0 Z" fill="#d8d8d8"/><path d="M526.6,110.2 L524.0,111.5 L524.0,114.3 L526.6,113.0 Z" fill="#c4c4c4"/><path d="M521.4,110.2 L524.0,108.9 L526.6,110.2 L524.0,111.5 Z" fill="#f4f4f4"/></g><g stroke="#9c9c9c" stroke-width="0.3"><path d="M522.0,116.1 L524.4,117.3 L524.4,119.9 L522.0,118.7 Z" fill="#c4c4c4"/><path d="M526.8,116.1 L524.4,117.3 L524.4,119.9 L526.8,118.7 Z" fill="#b2b2b2"/><path d="M522.0,116.1 L524.4,114.9 L526.8,116.1 L524.4,117.3 Z" fill="#e0e0e0"/></g><g stroke="#9c9c9c" stroke-width="0.3"><path d="M516.8,117.8 L519.4,119.1 L519.4,121.9 L516.8,120.6 Z" fill="#dadada"/><path d="M522.0,117.8 L519.4,119.1 L519.4,121.9 L522.0,120.6 Z" fill="#c6c6c6"/><path d="M516.8,117.8 L519.4,116.5 L522.0,117.8 L519.4,119.1 Z" fill="#f4f4f4"/></g>
 <!-- multitransform -->
 <g stroke="#8e8e8e" stroke-width="0.6">
  <path d="M534.6,124.4 L534.6,116.4 L539,111.4 L547.6,105.6 L554.6,108 L554.6,124.4 Z" fill="#a8a8a8"/>
  <path d="M534.6,121 L554.6,123.2 L554.6,124.4 L534.6,124.4 Z" fill="#969696" stroke="none"/>
 </g>
 <g stroke="#949494" stroke-width="0.4"><path d="M542.4,107.9 L547.6,110.5 L547.6,113.9 L542.4,111.3 Z" fill="#c0c0c0"/><path d="M552.8,107.9 L547.6,110.5 L547.6,113.9 L552.8,111.3 Z" fill="#adadad"/><path d="M542.4,107.9 L547.6,105.3 L552.8,107.9 L547.6,110.5 Z" fill="#e2e2e2"/></g><g stroke="#8e8e8e" stroke-width="0.4"><path d="M537.0,108.8 L539.4,110.0 L539.4,112.8 L537.0,111.6 Z" fill="#cacaca"/><path d="M541.8,108.8 L539.4,110.0 L539.4,112.8 L541.8,111.6 Z" fill="#b8b8b8"/><path d="M537.0,108.8 L539.4,107.6 L541.8,108.8 L539.4,110.0 Z" fill="#e4e4e4"/></g><g stroke="#909090" stroke-width="0.4"><path d="M540.8,112.7 L544.0,114.3 L544.0,117.7 L540.8,116.1 Z" fill="#c6c6c6"/><path d="M547.2,112.7 L544.0,114.3 L544.0,117.7 L547.2,116.1 Z" fill="#b2b2b2"/><path d="M540.8,112.7 L544.0,111.1 L547.2,112.7 L544.0,114.3 Z" fill="#dcdcdc"/></g><g stroke="#989898" stroke-width="0.4"><path d="M546.1,116.7 L549.4,118.3 L549.4,121.8 L546.1,120.2 Z" fill="#dedede"/><path d="M552.7,116.7 L549.4,118.3 L549.4,121.8 L552.7,120.2 Z" fill="#cacaca"/><path d="M546.1,116.7 L549.4,115.0 L552.7,116.7 L549.4,118.3 Z" fill="#f6f6f6"/></g>
 <g stroke="#5e5e5e" stroke-width="0.4"><path d="M539.8,118 C539.8,116.8 544.8,116.8 544.8,118 L544.8,121.4 C544.8,122.8 539.8,122.8 539.8,121.4 Z" fill="#6e6e6e"/><ellipse cx="542.3" cy="118" rx="2.5" ry="1" fill="#8c8c8c"/></g>
 <rect x="560" y="104" width="1" height="21" fill="#dddddd"/>
 <!-- fillet -->
 <g stroke="#7a7a7a" stroke-width="0.7">
  <path d="M567.6,120.4 L567.6,113.4 C567.8,109.4 571.4,106.4 576.4,105.8 L587.6,109 C582,109.6 578,112.6 577.6,117 L577.6,124 Z" fill="url(#gFil)"/>
  <path d="M577.6,124 L577.6,117 C578,112.6 582,109.6 587.6,109 L587.6,119 Z" fill="#989898"/>
  <path d="M567.6,116.4 L577.6,119.8 M567.6,118.2 L577.6,121.6" stroke="#a2a2a2" stroke-width="0.6" fill="none"/>
  <path d="M575.2,106.6 L585.4,109.6" stroke="#a8a8a8" stroke-width="0.6" fill="none"/>
 </g>
 <!-- chamfer (partial) -->
 <path d="M595.4,120 L595.4,113.6 L600.6,108.2 L600.6,122 Z" fill="#8e8e8e" stroke="#7a7a7a" stroke-width="0.7"/>
</g>

<!-- tab bar lines -->
<rect x="0" y="574" width="76" height="1" fill="#dcdcdc"/>
<rect x="195" y="574" width="405" height="1" fill="#dcdcdc"/>
<rect x="195" y="555" width="1" height="20" fill="#e2e2e2"/>
<rect x="75.5" y="555" width="1" height="20" fill="#e2e2e2"/>
<!-- ===== TABS ===== -->
<g id="tabs">
 <!-- gray close -->
 <rect x="52.6" y="558.2" width="11.8" height="11.2" rx="1.6" fill="#bebebe" stroke="#acacac" stroke-width="0.8"/>
 <path d="M55.8,561.2 L61.2,566.4 M61.2,561.2 L55.8,566.4" stroke="#fff" stroke-width="1.7"/>
 <!-- red close -->
 <rect x="171.4" y="559.2" width="11.2" height="11.2" rx="1.6" fill="#e2855e" stroke="#e2442e" stroke-width="1"/>
 <path d="M174.2,562.2 L179.8,567.6 M179.8,562.2 L174.2,567.6" stroke="#fff" stroke-width="1.8"/>
 <!-- freecad logo -->
 <path d="M88.2,557.4 L95.8,557.4 L95.8,560 L91.2,560 L91.2,562.6 L94.2,562.6 L94.2,565.2 L91.2,565.2 L91.2,570.4 L88.2,570.4 Z" fill="#cf1a1a" stroke="#8e1010" stroke-width="0.4"/>
 <g transform="translate(96.9,566)">
  <g fill="#3c64a8">
   <circle r="3.4"/>
   <g id="teeth"><path d="M-1.1,-5 L1.1,-5 L1.4,0 L1.1,5 L-1.1,5 L-1.4,0 Z"/><path d="M-5,-1.1 L-5,1.1 L0,1.4 L5,1.1 L5,-1.1 L0,-1.4 Z"/></g>
   <use href="#teeth" transform="rotate(45)"/>
  </g>
  <circle r="1.5" fill="#f4f6fa"/>
 </g>
</g>

</svg>
</body></html>
